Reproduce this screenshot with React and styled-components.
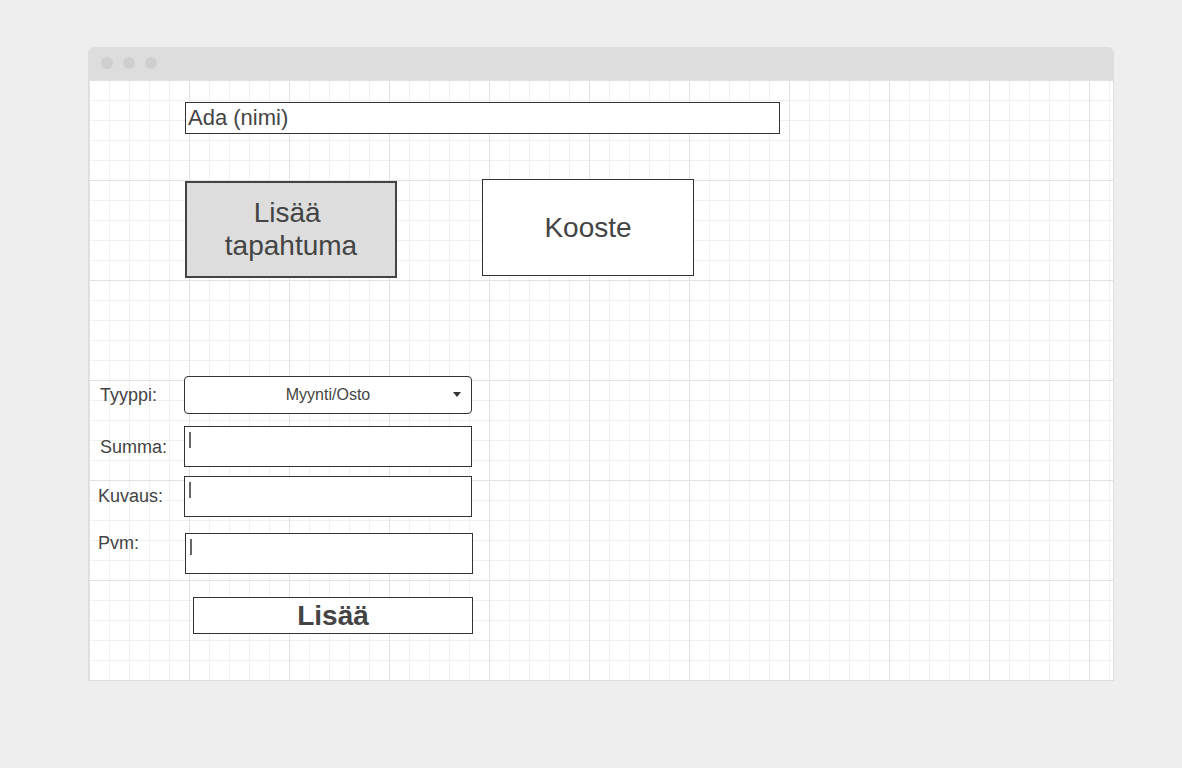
import React from "react";
import styled, { createGlobalStyle } from "styled-components";

const GlobalStyle = createGlobalStyle`
  body {
    margin: 0;
    background: #eeeeee;
    font-family: "Liberation Sans", Arial, sans-serif;
    color: #444444;
  }
`;

const Page = styled.div`
  padding: 47px 0 0 88px;
  height: 768px;
  box-sizing: border-box;
`;

const Window = styled.div`
  width: 1026px;
  border: 1px solid #dddddd;
  border-top: none;
  border-radius: 6px 6px 0 0;
  box-sizing: border-box;
  overflow: hidden;
`;

const TitleBar = styled.div`
  height: 33px;
  background: #dddddd;
  display: flex;
  align-items: center;
  gap: 10px;
  padding: 0 0 1px 13px;
  box-sizing: border-box;
  margin: 0 -1px;
`;

const Dot = styled.span`
  width: 12px;
  height: 12px;
  border-radius: 50%;
  background: #cfcfcf;
`;

const Canvas = styled.div`
  height: 600px;
  background-color: #ffffff;
  background-image:
    linear-gradient(to right, #e2e2e2 1px, transparent 1px),
    linear-gradient(to bottom, #e2e2e2 1px, transparent 1px),
    linear-gradient(to right, #f0f0f0 1px, transparent 1px),
    linear-gradient(to bottom, #f0f0f0 1px, transparent 1px);
  background-size: 100px 100px, 100px 100px, 20px 20px, 20px 20px;
  display: flex;
  flex-direction: column;
  align-items: flex-start;
  padding-top: 22px;
  box-sizing: border-box;
`;

const NameField = styled.div`
  margin-left: 96px;
  width: 595px;
  height: 32px;
  border: 1px solid #333333;
  background: #ffffff;
  box-sizing: border-box;
  font-size: 22px;
  line-height: 30px;
  padding-left: 2px;
  color: #444444;
`;

const ButtonRow = styled.div`
  display: flex;
  align-items: flex-start;
  gap: 85px;
  margin: 45px 0 0 96px;
`;

const BigButton = styled.div`
  width: 212px;
  height: 97px;
  margin-top: ${(p) => (p.$primary ? "2px" : "0")};
  box-sizing: border-box;
  border: ${(p) => (p.$primary ? "2px solid #444444" : "1px solid #333333")};
  background: ${(p) => (p.$primary ? "#dddddd" : "#ffffff")};
  display: flex;
  align-items: center;
  justify-content: center;
  text-align: center;
  font-size: 28px;
  line-height: 33px;
  color: #444444;
  padding-bottom: ${(p) => (p.$primary ? "2px" : "1px")};
`;

const Form = styled.div`
  margin-top: 98px;
  display: flex;
  flex-direction: column;
`;

const Row = styled.div`
  display: flex;
  align-items: center;
  margin-top: ${(p) => p.$top || 0}px;
`;

const Label = styled.div`
  width: 95px;
  box-sizing: border-box;
  padding-left: ${(p) => p.$indent}px;
  padding-top: ${(p) => p.$drop || 0}px;
  align-self: ${(p) => (p.$top ? "flex-start" : "center")};
  font-size: 18px;
  line-height: 21px;
  color: #444444;
`;

const Select = styled.div`
  width: 288px;
  height: 38px;
  box-sizing: border-box;
  border: 1px solid #333333;
  border-radius: 4px;
  background: #ffffff;
  position: relative;
  display: flex;
  align-items: center;
  justify-content: center;
  font-size: 16px;
  color: #444444;
`;

const Arrow = styled.span`
  position: absolute;
  right: 10px;
  top: 15px;
  width: 0;
  height: 0;
  border-left: 4px solid transparent;
  border-right: 4px solid transparent;
  border-top: 5px solid #333333;
`;

const Field = styled.div`
  width: 288px;
  height: 41px;
  box-sizing: border-box;
  border: 1px solid #333333;
  background: #ffffff;
  margin-left: ${(p) => p.$shift || 0}px;
  padding: 5px 0 0 4px;
`;

const Caret = styled.span`
  display: block;
  width: 2px;
  height: 16px;
  background: #666666;
`;

const SubmitButton = styled.div`
  width: 280px;
  height: 37px;
  margin-left: 9px;
  box-sizing: border-box;
  border: 1px solid #333333;
  background: #ffffff;
  display: flex;
  align-items: center;
  justify-content: center;
  font-size: 28px;
  font-weight: bold;
  color: #444444;
`;

export default function App() {
  return (
    <>
      <GlobalStyle />
      <Page>
        <Window>
          <TitleBar>
            <Dot />
            <Dot />
            <Dot />
          </TitleBar>
          <Canvas>
            <NameField>Ada (nimi)</NameField>
            <ButtonRow>
              <BigButton $primary>
                Lisää&nbsp;
                <br />
                tapahtuma
              </BigButton>
              <BigButton>Kooste</BigButton>
            </ButtonRow>
            <Form>
              <Row>
                <Label $indent={11}>Tyyppi:</Label>
                <Select>
                  Myynti/Osto
                  <Arrow />
                </Select>
              </Row>
              <Row $top={12}>
                <Label $indent={11} $drop={2}>
                  Summa:
                </Label>
                <Field>
                  <Caret />
                </Field>
              </Row>
              <Row $top={9}>
                <Label $indent={9}>Kuvaus:</Label>
                <Field>
                  <Caret />
                </Field>
              </Row>
              <Row $top={16}>
                <Label $indent={9} $top>
                  Pvm:
                </Label>
                <Field $shift={1}>
                  <Caret />
                </Field>
              </Row>
              <Row $top={23}>
                <Label $indent={0} />
                <SubmitButton>Lisää</SubmitButton>
              </Row>
            </Form>
          </Canvas>
        </Window>
      </Page>
    </>
  );
}
